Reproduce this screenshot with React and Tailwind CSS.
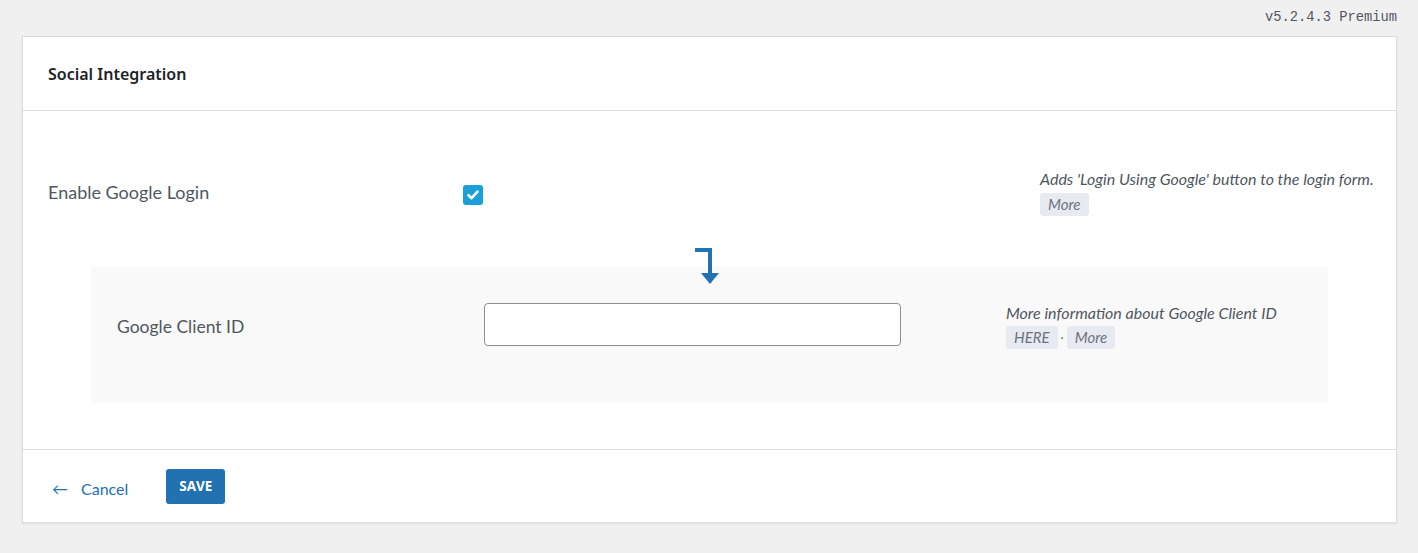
import React, { useState } from "react";

const Badge = ({ children }) => (
  <span className="inline-block rounded-[3px] bg-[#e7ebf1] px-[8px] h-[23px] leading-[23px] text-[15px] italic text-[#6b7280]">
    {children}
  </span>
);

const CornerArrow = () => (
  <svg width="28" height="38" viewBox="0 0 28 38" className="block">
    <path d="M2 2 H17 V26" fill="none" stroke="#2271b1" strokeWidth="4" />
    <path d="M8 25 H26 L17 36 Z" fill="#2271b1" />
  </svg>
);

const App = () => {
  const [googleLogin, setGoogleLogin] = useState(true);
  const [clientId, setClientId] = useState("");

  return (
    <div
      className="min-h-screen bg-[#f0f0f1] pb-[30px]"
      style={{ fontFamily: "Lato, 'Open Sans', sans-serif" }}
    >
      {/* version */}
      <div className="h-[36px] flex items-center justify-end pr-[21px]">
        <span className="text-[13.75px] text-[#50575e]" style={{ fontFamily: "'Liberation Mono', monospace" }}>
          v5.2.4.3 Premium
        </span>
      </div>

      <div className="ml-[22px] mr-[21px] bg-white border border-[#dcdcde] shadow-[0_1px_2px_rgba(0,0,0,0.06)]">
        {/* header */}
        <div className="h-[74px] flex items-center px-[25px] border-b border-[#dcdcde]">
          <h2
            className="text-[16px] font-semibold text-[#1d2327]"
            style={{ fontFamily: "'Noto Sans', sans-serif" }}
          >
            Social Integration
          </h2>
        </div>

        {/* body */}
        <div className="pt-[58px] pb-[46px] border-b border-[#dcdcde]">
          <div className="flex pl-[25px]">
            <div className="w-[415px] pt-[11px] text-[18px] leading-[24px] text-[#50575e]">
              Enable Google Login
            </div>
            <div className="w-[577px] pt-[16px]">
              <button
                type="button"
                onClick={() => setGoogleLogin(!googleLogin)}
                className={`w-[20px] h-[20px] rounded-[3px] flex items-center justify-center ${
                  googleLogin ? "bg-[#1a9fd8]" : "bg-white border border-[#8c8f94]"
                }`}
              >
                {googleLogin && (
                  <svg width="14" height="14" viewBox="0 0 14 14">
                    <path d="M2.5 7.2 L5.6 10.2 L11.5 3.6" fill="none" stroke="white" strokeWidth="2.6" strokeLinecap="round" strokeLinejoin="round" />
                  </svg>
                )}
              </button>
            </div>
            <div className="flex-1">
              <p className="text-[16px] leading-[20px] italic text-[#50575e]">
                Adds 'Login Using Google' button to the login form.
              </p>
              <div className="mt-[3px]">
                <Badge>More</Badge>
              </div>
            </div>
          </div>

          {/* dependent panel */}
          <div className="relative mx-[68px] mt-[51px] h-[136px] bg-[#f9f9f9] pt-[36px] pl-[26px] flex">
            <div className="absolute left-[602px] top-[-19px]">
              <CornerArrow />
            </div>
            <div className="w-[367px] pt-[12px] text-[17.5px] leading-[24px] text-[#50575e]">
              Google Client ID
            </div>
            <div className="w-[522px]">
              <input
                type="text"
                value={clientId}
                onChange={(e) => setClientId(e.target.value)}
                className="w-[417px] h-[43px] rounded-[4px] border border-[#8c8f94] bg-white px-3 focus:outline-none"
              />
            </div>
            <div className="flex-1">
              <p className="text-[16px] leading-[20px] italic text-[#50575e]">
                More information about Google Client ID
              </p>
              <div className="mt-[3px] flex items-center gap-[2px] text-[#646970]">
                <Badge>HERE</Badge>
                <span className="text-[12px] px-[1px]">·</span>
                <Badge>More</Badge>
              </div>
            </div>
          </div>
        </div>

        {/* footer */}
        <div className="h-[72px] flex items-center pl-[29px]">
          <a href="#" className="flex items-center pt-[5px] text-[16px] text-[#2271b1]">
            <span className="mr-[13px]">←</span>
            <span>Cancel</span>
          </a>
          <button
            type="button"
            className="ml-[38px] w-[59px] h-[35px] rounded-[3px] bg-[#2271b1] text-white text-[13.5px] font-bold"
            style={{ fontFamily: "'Open Sans', sans-serif" }}
          >
            SAVE
          </button>
        </div>
      </div>
    </div>
  );
};

export default App;
